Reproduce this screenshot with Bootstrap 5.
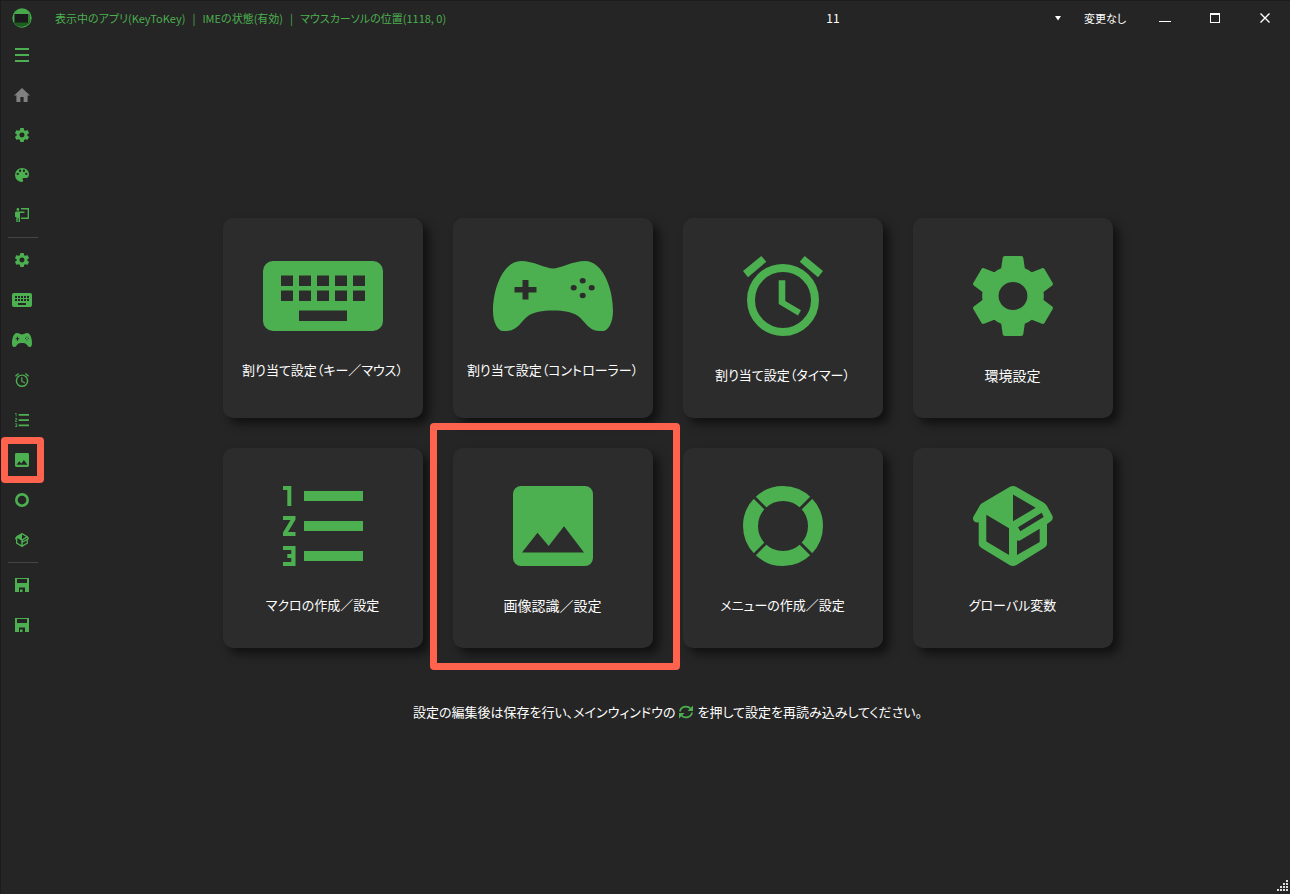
<!DOCTYPE html>
<html lang="ja" data-bs-theme="dark">
<head>
<meta charset="utf-8">
<meta name="viewport" content="width=device-width, initial-scale=1">
<title>KeyToKey</title>
<link rel="stylesheet" href="https://cdn.jsdelivr.net/npm/bootstrap@5.3.0/dist/css/bootstrap.min.css">
<style>
  :root { --green: #4caf50; --bg: #252525; --panel: #2c2c2c; --mark: #ff624d; }
  body {
    background: var(--bg); color: #fff; font-size: 13px; line-height: 20px;
    font-family: "Noto Sans CJK JP", sans-serif;
    font-feature-settings: "palt";
  }
  .app-window { border-top: 1px solid #1c1c1c; border-left: 1px solid #1c1c1c; }
  button { font-feature-settings: inherit; }
  svg { display: block; fill: currentColor; }
  .title-bar { height: 34px; font-size: 11px; }
  .title-side { flex: 1 1 0; }
  .app-logo { width: 42px; }
  .status-text { color: var(--green); padding-left: 12px; }
  .status-text li + li::before { content: "|"; padding: 0 7px; }
  .profile-box { width: 466px; }
  .profile-box select {
    appearance: none; background: transparent; border: 0; color: #fff; font: inherit; font-size: 12px;
    text-align: center; text-align-last: center; height: 34px; padding: 0;
  }
  .profile-box option { background: var(--panel); }
  .profile-caret { right: 5px; top: 15px; pointer-events: none; }
  .change-state { width: 74px; padding-left: 4px; }
  .win-btn { width: 50px; height: 34px; color: #fff; }
  .side-nav { width: 44px; padding-right: 2px; }
  .side-btn { height: 40px; color: var(--green); }
  .side-btn.current { color: #808080; }
  .side-rule { height: 5px; padding: 2px 5px 2px 7px; }
  .side-rule::before { content: ""; display: block; height: 1px; background: #454545; }
  .tile-block { padding-top: 15px; }
  .tile-grid { display: grid; grid-template-columns: repeat(4, 200px); gap: 30px; }
  .tile {
    --slit: var(--panel);
    height: 200px; padding: 5px 0 0; gap: 29px; border-radius: 10px; color: #fff; font-size: 14px;
    background: var(--panel); box-shadow: 6px 6px 10px rgba(0, 0, 0, .55);
  }
  .tile svg { color: var(--green); }
  .tile.kana-label { font-size: 13px; }
  .marked { z-index: 2; }
  .marked::after {
    content: ""; position: absolute; border: 7px solid var(--mark); border-radius: 4px; pointer-events: none;
  }
  .tile.marked::after { inset: -25px -27px -22px -23px; }
  .side-btn.marked::after { inset: -3px -1px -3px 0; }
  .hint { line-height: 28px; margin: 50px 0 0; }
  .hint svg { color: var(--green); }
  .size-grip { right: 1px; bottom: 2px; color: #ddd; }
</style>
</head>
<body>
<svg width="0" height="0" class="position-absolute" aria-hidden="true">
  <symbol id="i-keyboard" viewBox="0 0 120 70" preserveAspectRatio="none">
    <path fill-rule="evenodd" d="M10 0H110A10 10 0 0 1 120 10V60A10 10 0 0 1 110 70H10A10 10 0 0 1 0 60V10A10 10 0 0 1 10 0ZM18 14.500V25H30V14.500ZM36 14.500V25H48V14.500ZM54 14.500V25H66V14.500ZM72 14.500V25H84V14.500ZM90 14.500V25H102V14.500ZM18 29.500V40H30V29.500ZM36 29.500V40H48V29.500ZM54 29.500V40H66V29.500ZM72 29.500V40H84V29.500ZM90 29.500V40H102V29.500ZM36 49.500V60H84V49.500Z"/>
  </symbol>
  <symbol id="i-pad" viewBox="0 0 120 70" preserveAspectRatio="none">
    <path fill-rule="evenodd" d="M28 0C40 0 53 7.500 60 7.500C67 7.500 80 0 92 0C109 0 120 26 120 50C120 62 115 70 110 70H106C95 69.500 92 60 85 55C79 51 71 49.500 60 49.500C49 49.500 41 51 35 55C28 60 25 69.500 14 70H10C5 70 0 62 0 50C0 26 11 0 28 0ZM29.500 19V26H21.500V31.500H29.500V38.500H35.500V31.500H43.500V26H35.500V19ZM86.700 19.700a3 2.700 0 1 0 6 0a3 2.700 0 1 0 -6 0ZM77.700 26.700a3 2.700 0 1 0 6 0a3 2.700 0 1 0 -6 0ZM95.700 26.700a3 2.700 0 1 0 6 0a3 2.700 0 1 0 -6 0ZM86.700 34.500a3 2.700 0 1 0 6 0a3 2.700 0 1 0 -6 0Z"/>
  </symbol>
  <symbol id="i-alarm" viewBox="0 0 80 80">
    <circle cx="40" cy="44" r="32" fill="none" stroke="currentColor" stroke-width="8"/>
    <path d="M35.700 24.300H42.300V45L58 54.300L55 59.500L35.700 48ZM18.300 0L23.300 5.700L5 21.300L0 15ZM61.700 0L56.700 5.700L75 21.300L80 15Z"/>
  </symbol>
  <symbol id="i-gear" viewBox="2.27 2 19.46 20" preserveAspectRatio="none">
    <path d="M12,15.5A3.5,3.5 0 0,1 8.500,12A3.500,3.500 0 0,1 12,8.500A3.500,3.500 0 0,1 15.500,12A3.500,3.500 0 0,1 12,15.500M19.430,12.970C19.470,12.650 19.500,12.330 19.500,12C19.500,11.670 19.470,11.340 19.430,11L21.540,9.370C21.730,9.220 21.780,8.950 21.660,8.730L19.660,5.270C19.540,5.050 19.270,4.960 19.050,5.050L16.560,6.050C16.040,5.660 15.500,5.320 14.870,5.070L14.500,2.420C14.460,2.180 14.250,2 14,2H10C9.750,2 9.540,2.180 9.500,2.420L9.130,5.070C8.500,5.320 7.960,5.660 7.440,6.050L4.950,5.050C4.730,4.960 4.460,5.050 4.340,5.270L2.340,8.730C2.210,8.950 2.270,9.220 2.460,9.370L4.570,11C4.530,11.340 4.500,11.670 4.500,12C4.500,12.330 4.530,12.650 4.570,12.970L2.460,14.630C2.270,14.780 2.210,15.050 2.340,15.270L4.340,18.730C4.460,18.950 4.730,19.030 4.950,18.950L7.440,17.940C7.960,18.340 8.500,18.680 9.130,18.930L9.500,21.580C9.540,21.820 9.750,22 10,22H14C14.250,22 14.460,21.820 14.500,21.580L14.870,18.930C15.500,18.670 16.040,18.340 16.560,17.940L19.050,18.950C19.270,19.030 19.540,18.950 19.660,18.730L21.660,15.270C21.780,15.050 21.730,14.780 21.540,14.630L19.430,12.970Z"/>
  </symbol>
  <symbol id="i-list" viewBox="0 0 80 80">
    <path d="M0 0H8.300V20H4.300V4H0ZM0 30H12.500V33.600L5 46H12.500V50H0V46.400L7.500 34H0ZM0 60H12.500V80H0V76H8.300V72H4.300V68H8.300V64H0ZM21 5H80V15H21ZM21 35H80V45H21ZM21 65H80V75H21Z"/>
  </symbol>
  <symbol id="i-image" viewBox="0 0 80 80">
    <path fill-rule="evenodd" d="M8 0H72A8 8 0 0 1 80 8V72A8 8 0 0 1 72 80H8A8 8 0 0 1 0 72V8A8 8 0 0 1 8 0ZM9 66.500H71L51 40.300L35.700 60L24.500 46.700Z"/>
  </symbol>
  <symbol id="i-ring" viewBox="0 0 80 80">
    <circle cx="40" cy="40" r="32.500" fill="none" stroke="currentColor" stroke-width="15"/>
    <path d="M10 10L70 70M70 10L10 70" fill="none" stroke="var(--slit, none)" stroke-width="3"/>
  </symbol>
  <symbol id="i-box" viewBox="0 0 80 80">
    <path fill-rule="evenodd" d="M36.500 1Q40 -1 43.500 1L70.500 16.500Q73 18 74 20L79.500 30Q80.500 34 77.500 35.500L74 38V58Q74 60.500 71 62L43.500 79Q40 81 36.500 79L8.500 62Q5.700 60.500 5.700 58V36.300Q2 37 0.500 34.500Q-0.500 32.500 0.500 30.500L6 21Q7 18.500 9 17.300ZM40 8.500V35.300L62.700 21.800ZM13.300 28.700V55.500L36 69V42.300ZM68.700 26.800L45 41.300L47.300 45.300L70.700 31ZM66.700 42.800L46.500 54.700L44 54.500V69L66.700 56Z"/>
  </symbol>
  <symbol id="i-home" viewBox="2 3 20 17" preserveAspectRatio="none">
    <path d="M10,20V14H14V20H19V12H22L12,3L2,12H5V20H10Z"/>
  </symbol>
  <symbol id="i-menu" viewBox="0 0 14 14"><path d="M0 0H14V2H0ZM0 6H14V8H0ZM0 12H14V14H0Z"/></symbol>
  <symbol id="i-palette" viewBox="3 3 18 18">
    <path d="M17.500,12A1.500,1.500 0 0,1 16,10.500A1.500,1.500 0 0,1 17.500,9A1.500,1.500 0 0,1 19,10.500A1.500,1.500 0 0,1 17.500,12M14.500,8A1.500,1.500 0 0,1 13,6.500A1.500,1.500 0 0,1 14.500,5A1.500,1.500 0 0,1 16,6.500A1.500,1.500 0 0,1 14.500,8M9.500,8A1.500,1.500 0 0,1 8,6.500A1.500,1.500 0 0,1 9.500,5A1.500,1.500 0 0,1 11,6.500A1.500,1.500 0 0,1 9.500,8M6.500,12A1.500,1.500 0 0,1 5,10.500A1.500,1.500 0 0,1 6.500,9A1.500,1.500 0 0,1 8,10.500A1.500,1.500 0 0,1 6.500,12M12,3A9,9 0 0,0 3,12A9,9 0 0,0 12,21A1.500,1.500 0 0,0 13.500,19.500C13.500,19.110 13.350,18.760 13.110,18.500C12.880,18.230 12.730,17.880 12.730,17.500A1.500,1.500 0 0,1 14.230,16H16A5,5 0 0,0 21,11C21,6.580 16.970,3 12,3Z"/>
  </symbol>
  <symbol id="i-teach" viewBox="0 0 14 14">
    <path d="M6 0H14V11H6V9.500H12.600V1.400H6ZM1.500 1.500a1.400 1.400 0 1 0 2.800 0a1.400 1.400 0 1 0 -2.800 0ZM1 3.500H9.500V5H5V14H3.500V10H2.700V14H1.300V9H0V4.500Z"/>
  </symbol>
  <symbol id="i-save" viewBox="0 0 14 14">
    <path fill-rule="evenodd" d="M0 0H14V14H10V9.500H4V14H0ZM2 1V5H12V1ZM5 11.500H7.500V14H5Z"/>
  </symbol>
</svg>

<div class="app-window min-vh-100 d-flex flex-column position-relative">
  <header class="title-bar d-flex align-items-center">
    <div class="title-side d-flex align-items-center">
      <div class="app-logo d-flex justify-content-center flex-shrink-0">
        <svg width="20" height="20" viewBox="0 0 20 20" aria-hidden="true">
          <circle cx="10" cy="10" r="9.700" fill="#47a84c"/>
          <path d="M1 14H16L19 11A9.700 9.700 0 0 1 1.500 14.500Z" fill="#1b5e20"/>
          <path d="M16 6H18V12L16 14Z" fill="#2e7d32"/>
          <rect x="2.500" y="6" width="13.500" height="8.500" fill="#1b1b1b"/>
        </svg>
      </div>
      <ul class="status-text list-unstyled d-flex text-nowrap mb-0">
        <li>表示中のアプリ(KeyToKey)</li>
        <li>IMEの状態(有効)</li>
        <li>マウスカーソルの位置(1118, 0)</li>
      </ul>
    </div>
    <div class="profile-box position-relative">
      <select class="w-100" aria-label="プロファイル"><option>11</option></select>
      <svg class="profile-caret position-absolute" width="6" height="5" viewBox="0 0 6 5" aria-hidden="true"><path d="M0 0H6L3 4.500Z"/></svg>
    </div>
    <div class="change-state text-center">変更なし</div>
    <div class="d-flex">
      <button class="win-btn btn p-0 border-0 rounded-0 d-flex align-items-center justify-content-center" aria-label="最小化"><svg width="12" height="10"><path d="M0 8H12V9H0Z"/></svg></button>
      <button class="win-btn btn p-0 border-0 rounded-0 d-flex align-items-center justify-content-center" aria-label="最大化"><svg width="10" height="10"><path fill-rule="evenodd" d="M0 0H10V10H0ZM1 2V9H9V2Z"/></svg></button>
      <button class="win-btn btn p-0 border-0 rounded-0 d-flex align-items-center justify-content-center" aria-label="閉じる"><svg width="10" height="10"><path d="M0.500 0.500L9.500 9.500M9.500 0.500L0.500 9.500" stroke="currentColor" stroke-width="1.400"/></svg></button>
    </div>
  </header>

  <div class="d-flex flex-grow-1">
    <nav class="side-nav flex-shrink-0 d-flex flex-column" aria-label="メニュー">
      <button class="side-btn btn w-100 p-0 border-0 d-flex align-items-center justify-content-center" aria-label="メニューを開く"><svg width="14" height="14"><use href="#i-menu"/></svg></button>
      <button class="side-btn current btn w-100 p-0 border-0 d-flex align-items-center justify-content-center" aria-label="ホーム"><svg width="16" height="14"><use href="#i-home"/></svg></button>
      <button class="side-btn btn w-100 p-0 border-0 d-flex align-items-center justify-content-center" aria-label="設定"><svg width="14" height="14"><use href="#i-gear"/></svg></button>
      <button class="side-btn btn w-100 p-0 border-0 d-flex align-items-center justify-content-center" aria-label="配色"><svg width="14" height="14"><use href="#i-palette"/></svg></button>
      <button class="side-btn btn w-100 p-0 border-0 d-flex align-items-center justify-content-center" aria-label="チュートリアル"><svg width="14" height="14"><use href="#i-teach"/></svg></button>
      <div class="side-rule"></div>
      <button class="side-btn btn w-100 p-0 border-0 d-flex align-items-center justify-content-center" aria-label="環境設定"><svg width="14" height="14"><use href="#i-gear"/></svg></button>
      <button class="side-btn btn w-100 p-0 border-0 d-flex align-items-center justify-content-center" aria-label="キー／マウス"><svg width="20" height="14"><use href="#i-keyboard"/></svg></button>
      <button class="side-btn btn w-100 p-0 border-0 d-flex align-items-center justify-content-center" aria-label="コントローラー"><svg width="20" height="14"><use href="#i-pad"/></svg></button>
      <button class="side-btn btn w-100 p-0 border-0 d-flex align-items-center justify-content-center" aria-label="タイマー"><svg width="14" height="14"><use href="#i-alarm"/></svg></button>
      <button class="side-btn btn w-100 p-0 border-0 d-flex align-items-center justify-content-center" aria-label="マクロ"><svg width="14" height="14"><use href="#i-list"/></svg></button>
      <button class="side-btn marked position-relative btn w-100 p-0 border-0 d-flex align-items-center justify-content-center" aria-label="画像認識"><svg width="14" height="14"><use href="#i-image"/></svg></button>
      <button class="side-btn btn w-100 p-0 border-0 d-flex align-items-center justify-content-center" aria-label="メニュー作成"><svg width="14" height="14"><use href="#i-ring"/></svg></button>
      <button class="side-btn btn w-100 p-0 border-0 d-flex align-items-center justify-content-center" aria-label="グローバル変数"><svg width="14" height="14"><use href="#i-box"/></svg></button>
      <div class="side-rule"></div>
      <button class="side-btn btn w-100 p-0 border-0 d-flex align-items-center justify-content-center" aria-label="保存"><svg width="14" height="14"><use href="#i-save"/></svg></button>
      <button class="side-btn btn w-100 p-0 border-0 d-flex align-items-center justify-content-center" aria-label="別名で保存"><svg width="14" height="14"><use href="#i-save"/></svg></button>
    </nav>

    <main class="flex-grow-1 d-flex flex-column align-items-center justify-content-center">
      <div class="tile-block d-flex flex-column align-items-center">
        <div class="tile-grid">
          <button class="tile kana-label border-0 d-flex flex-column align-items-center justify-content-center text-nowrap"><svg width="120" height="70"><use href="#i-keyboard"/></svg><span>割り当て設定（キー／マウス）</span></button>
          <button class="tile kana-label border-0 d-flex flex-column align-items-center justify-content-center text-nowrap"><svg width="120" height="70"><use href="#i-pad"/></svg><span>割り当て設定（コントローラー）</span></button>
          <button class="tile kana-label border-0 d-flex flex-column align-items-center justify-content-center text-nowrap"><svg width="80" height="80"><use href="#i-alarm"/></svg><span>割り当て設定（タイマー）</span></button>
          <button class="tile border-0 d-flex flex-column align-items-center justify-content-center text-nowrap"><svg width="80" height="80"><use href="#i-gear"/></svg><span>環境設定</span></button>
          <button class="tile kana-label border-0 d-flex flex-column align-items-center justify-content-center text-nowrap"><svg width="80" height="80"><use href="#i-list"/></svg><span>マクロの作成／設定</span></button>
          <button class="tile marked position-relative border-0 d-flex flex-column align-items-center justify-content-center text-nowrap"><svg width="80" height="80"><use href="#i-image"/></svg><span>画像認識／設定</span></button>
          <button class="tile kana-label border-0 d-flex flex-column align-items-center justify-content-center text-nowrap"><svg width="80" height="80"><use href="#i-ring"/></svg><span>メニューの作成／設定</span></button>
          <button class="tile kana-label border-0 d-flex flex-column align-items-center justify-content-center text-nowrap"><svg width="80" height="80"><use href="#i-box"/></svg><span>グローバル変数</span></button>
        </div>
        <p class="hint d-flex align-items-center">
          <span>設定の編集後は保存を行い、メインウィンドウの</span>
          <svg class="mx-1" width="14" height="14" viewBox="0 0 14 14" aria-hidden="true">
            <path d="M1 6.500A6 5.500 0 0 1 11.500 3.500M13 7.500A6 5.500 0 0 1 2.500 10.500" fill="none" stroke="currentColor" stroke-width="1.800"/>
            <path d="M14 0.500V6H8.500ZM0 13.500V8H5.500Z"/>
          </svg>
          <span>を押して設定を再読み込みしてください。</span>
        </p>
      </div>
    </main>
  </div>
  <svg class="size-grip position-absolute" width="12" height="12" aria-hidden="true"><path d="M9 0h2v2h-2zM6 3h2v2h-2zM9 3h2v2h-2zM3 6h2v2h-2zM6 6h2v2h-2zM9 6h2v2h-2zM0 9h2v2h-2zM3 9h2v2h-2zM6 9h2v2h-2zM9 9h2v2h-2z"/></svg>
</div>
<script src="https://cdn.jsdelivr.net/npm/bootstrap@5.3.0/dist/js/bootstrap.bundle.min.js"></script>
</body>
</html>
